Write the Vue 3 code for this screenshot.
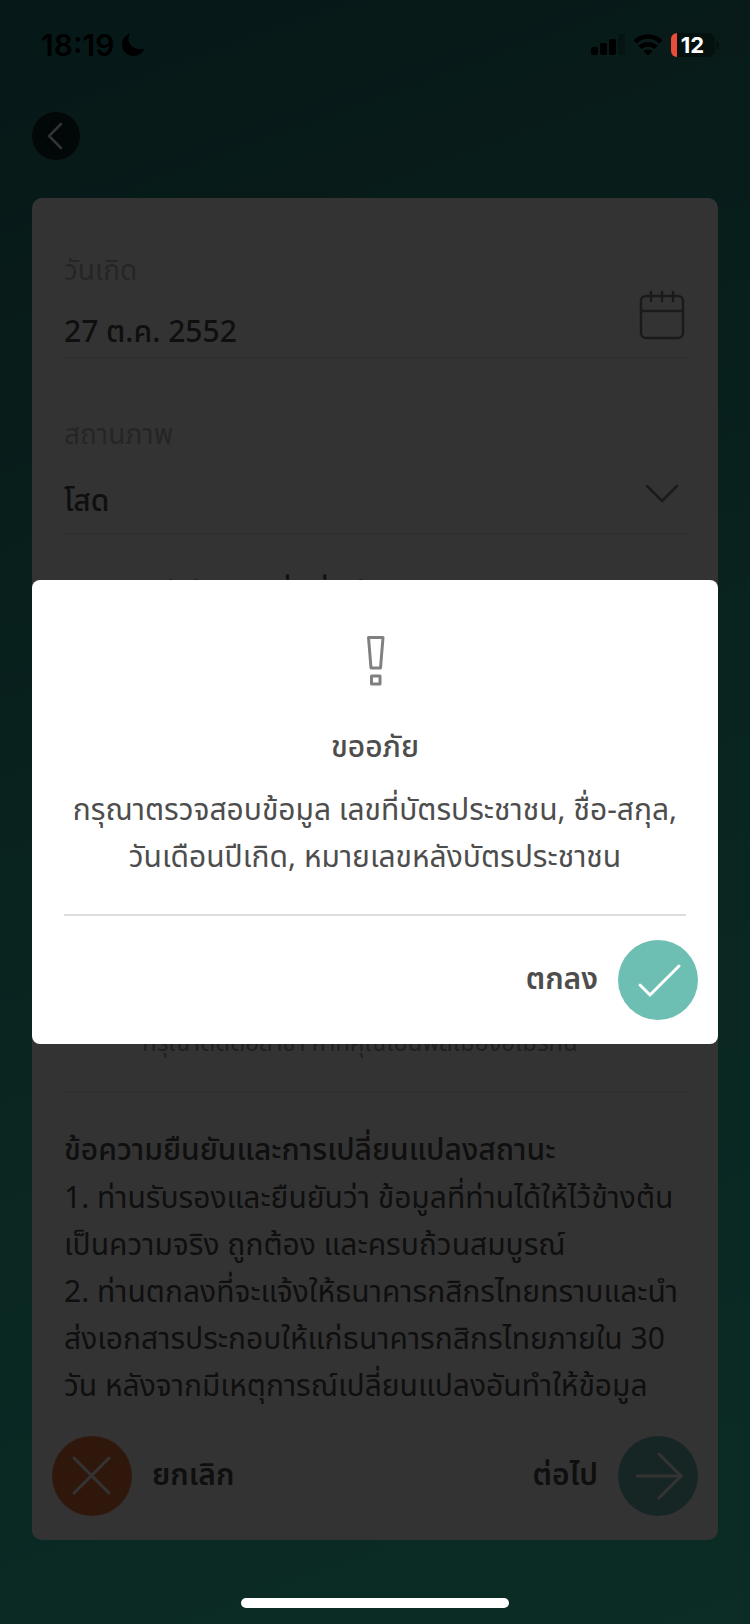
<script setup>
import { ref } from 'vue'

const birthDate = ref('27 ต.ค. 2552')
const status = ref('โสด')
const statuses = ['โสด', 'สมรส', 'หย่า']
const terms = [
  '1. ท่านรับรองและยืนยันว่า ข้อมูลที่ท่านได้ให้ไว้ข้างต้น',
  'เป็นความจริง ถูกต้อง และครบถ้วนสมบูรณ์',
  '2. ท่านตกลงที่จะแจ้งให้ธนาคารกสิกรไทยทราบและนำ',
  'ส่งเอกสารประกอบให้แก่ธนาคารกสิกรไทยภายใน 30',
  'วัน หลังจากมีเหตุการณ์เปลี่ยนแปลงอันทำให้ข้อมูล',
]
const message = [
  'กรุณาตรวจสอบข้อมูล เลขที่บัตรประชาชน, ชื่อ-สกุล,',
  'วันเดือนปีเกิด, หมายเลขหลังบัตรประชาชน',
]
</script>

<template>
  <div class="screen">
    <header class="status-bar">
      <div class="clock">
        <span class="time">18:19</span>
        <svg width="24" height="24" viewBox="0 0 24 24" aria-hidden="true">
          <path d="M9 .5C4 2 1 6.500 1 11.500C1 18 6 23 12.500 23C17.500 23 22 20 23.300 15.500C17 17.500 8 14 7.500 7C7.400 4.500 8 2.500 9 .5Z" />
        </svg>
      </div>
      <div class="indicators">
        <svg width="34" height="22" viewBox="0 0 34 22" aria-hidden="true">
          <rect x="0" y="13" width="7" height="8" rx="2" />
          <rect x="9" y="9" width="7" height="12" rx="2" />
          <rect x="18" y="5" width="7" height="16" rx="2" />
          <rect x="27" y="0" width="7" height="21" rx="2" opacity=".25" />
        </svg>
        <svg width="30" height="22" viewBox="0 0 30 22" aria-hidden="true">
          <g fill="none" stroke="#000" stroke-width="4.500">
            <path d="M2 8C9 .8 21 .8 28 8" />
            <path d="M7 13.500C11.500 9 18.500 9 23 13.500" />
          </g>
          <path d="M10.500 17.200C13 15 17 15 19.500 17.200L15 21.500Z" />
        </svg>
        <div class="battery"><span class="level"></span><span class="percent">12</span></div>
      </div>
    </header>

    <div class="toolbar">
      <button class="back" type="button" aria-label="กลับ">
        <svg width="48" height="48" viewBox="0 0 48 48" aria-hidden="true">
          <path d="M29 12L17 24L29 36" />
        </svg>
      </button>
    </div>

    <main class="card">
      <form class="fields" @submit.prevent>
        <div class="field field-date">
          <label for="birth">วันเกิด</label>
          <div class="control">
            <input id="birth" v-model="birthDate" type="text" />
            <svg class="calendar" width="48" height="50" viewBox="0 0 48 50" aria-hidden="true">
              <rect x="3" y="7" width="42" height="42" rx="5" />
              <path d="M3 22H45M13 3V12M24 3V12M35 3V12" />
            </svg>
          </div>
        </div>
        <div class="field field-status">
          <label for="status">สถานภาพ</label>
          <div class="control">
            <select id="status" v-model="status">
              <option v-for="s in statuses" :key="s">{{ s }}</option>
            </select>
            <svg class="chevron" width="48" height="48" viewBox="0 0 48 48" aria-hidden="true">
              <path d="M9 17L24 32L39 17" />
            </svg>
          </div>
        </div>
      </form>
      <section class="citizenship">
        <p class="question">ฉันไม่ใช่บุคคลที่มีที่อยู่อาศัยถาวรในอเมริกา</p>
        <p class="note">กรุณาติดต่อสาขา หากคุณเป็นพลเมืองอเมริกัน</p>
      </section>
      <section class="terms">
        <h2>ข้อความยืนยันและการเปลี่ยนแปลงสถานะ</h2>
        <p><span v-for="line in terms" :key="line">{{ line }}</span></p>
      </section>
      <footer class="actions">
        <button class="action" type="button">
          <span class="disc cancel">
            <svg width="80" height="80" viewBox="0 0 80 80" aria-hidden="true"><path d="M22 22L57 57M57 22L22 57" /></svg>
          </span>
          ยกเลิก
        </button>
        <button class="action" type="button">
          ต่อไป
          <span class="disc">
            <svg width="80" height="80" viewBox="0 0 80 80" aria-hidden="true"><path d="M19 40H62M41 18L63 40L41 62" /></svg>
          </span>
        </button>
      </footer>
    </main>

    <div class="overlay">
      <div class="dialog" role="alertdialog" aria-modal="true" aria-labelledby="dialog-title">
        <svg class="alert" width="20" height="50" viewBox="0 0 20 50" aria-hidden="true">
          <path d="M3.500 2.500H18L15.500 33H6Z" />
          <rect x="6.500" y="41" width="8.500" height="8" />
        </svg>
        <h1 id="dialog-title">ขออภัย</h1>
        <p><span v-for="line in message" :key="line">{{ line }}</span></p>
        <div class="dialog-actions">
          <button class="action" type="button">
            ตกลง
            <span class="disc">
              <svg width="80" height="80" viewBox="0 0 80 80" aria-hidden="true"><path d="M22 45L32 55L61 26" /></svg>
            </span>
          </button>
        </div>
      </div>
    </div>
    <div class="home-indicator"></div>
  </div>
</template>

<style>
body {
  margin: 0;
}
</style>

<style scoped>
.screen {
  position: relative;
  box-sizing: border-box;
  display: flex;
  flex-direction: column;
  min-height: 100vh;
  padding-bottom: 84px;
  background: linear-gradient(160deg, #1e7878 0%, #28877d 15%, #30b9a0 55%, #3cdcbe 100%);
  font-family: "Noto Sans", "Noto Sans Thai", sans-serif;
  font-size: 30px;
  color: #4d4d4d;
}
* {
  box-sizing: border-box;
}
h1,
h2,
p {
  margin: 0;
}
svg {
  display: block;
  flex: none;
  overflow: visible;
}
.status-bar {
  position: relative;
  z-index: 2;
  display: flex;
  justify-content: space-between;
  align-items: center;
  height: 90px;
  padding: 0 31px 0 41px;
  font-family: Inter, sans-serif;
}
.clock,
.indicators {
  display: flex;
  align-items: center;
}
.clock {
  gap: 7px;
}
.time {
  font-size: 30px;
  font-weight: 600;
  color: #000;
}
.indicators {
  gap: 8px;
}
.battery {
  position: relative;
  display: flex;
  align-items: center;
  width: 44px;
  height: 24px;
  margin-right: 4px;
  border-radius: 7px;
  background: #04110f;
}
.battery::after {
  content: "";
  position: absolute;
  right: -4px;
  width: 3px;
  height: 8px;
  border-radius: 0 3px 3px 0;
  background: #04110f;
}
.level {
  width: 6px;
  height: 24px;
  border-radius: 6px 0 0 6px;
  background: #eb4d3d;
}
.percent {
  flex: 1;
  padding-right: 7px;
  text-align: center;
  font-size: 22px;
  font-weight: 700;
  color: #fff;
}
.toolbar {
  padding: 22px 32px 38px;
}
button {
  padding: 0;
  border: 0;
  background: none;
  font: inherit;
  color: inherit;
}
.back {
  display: block;
  border-radius: 50%;
  background: #0a2323;
}
.back path {
  fill: none;
  stroke: #fff;
  stroke-width: 2.5;
  stroke-linecap: round;
}
.card {
  flex: 1;
  display: flex;
  flex-direction: column;
  margin: 0 32px;
  border-radius: 10px;
  background: #fff;
}
.fields,
.citizenship,
.terms {
  margin: 0 32px;
}
.field {
  display: flex;
  flex-direction: column;
  justify-content: flex-end;
  border-bottom: 2px solid #eee;
}
.field-date {
  height: 161px;
}
.field-status {
  height: 176px;
}
label {
  line-height: 40px;
  font-size: 28px;
  color: #bbb;
}
.control {
  display: flex;
  align-items: flex-start;
  justify-content: space-between;
  gap: 16px;
}
.field-date .control {
  height: 68px;
}
.field-status .control {
  height: 80px;
  padding-top: 16px;
}
input,
select {
  flex: 1;
  min-width: 0;
  height: 60px;
  padding: 0;
  border: 0;
  background: none;
  appearance: none;
  font: inherit;
  font-weight: 500;
  color: #4d4d4d;
}
.field-date input {
  height: 68px;
  padding-top: 20px;
}
.control svg {
  fill: none;
  stroke: #808080;
  stroke-width: 2.5;
  stroke-linecap: round;
}
.citizenship {
  flex: 1;
  display: flex;
  flex-direction: column;
  justify-content: space-between;
  padding: 38px 30px 34px 0;
  border-bottom: 2px solid #eee;
  text-align: center;
}
.question {
  font-weight: 500;
}
.note {
  font-size: 24px;
  line-height: 30px;
  color: #a0a0a0;
}
.terms {
  padding: 32px 0 4px;
  line-height: 47px;
}
h1,
h2 {
  font-size: 30px;
  font-weight: 500;
  line-height: 48px;
}
p span {
  display: block;
  white-space: nowrap;
}
.actions {
  display: flex;
  justify-content: space-between;
  padding: 24px 20px;
}
.action {
  display: flex;
  align-items: center;
  gap: 20px;
  font-weight: 600;
}
.disc {
  border-radius: 50%;
  background: #6cbfb2;
}
.disc.cancel {
  background: #f0733c;
}
.disc path {
  fill: none;
  stroke: #fff;
  stroke-width: 3;
  stroke-linecap: round;
}
.overlay {
  position: absolute;
  inset: 0;
  z-index: 1;
  display: flex;
  align-items: center;
  padding: 0 32px;
  background: rgba(0, 0, 0, 0.8);
}
.dialog {
  flex: 1;
  padding: 55px 32px 0;
  border-radius: 8px;
  background: #fff;
  text-align: center;
}
.alert {
  margin: 0 auto 37px;
  fill: none;
  stroke: #808080;
  stroke-width: 3;
  stroke-linejoin: round;
}
.dialog h1 {
  margin-bottom: 15px;
}
.dialog p {
  line-height: 47px;
}
.dialog-actions {
  display: flex;
  justify-content: flex-end;
  margin-top: 35px;
  margin-right: -12px;
  padding: 26px 0 24px;
  position: relative;
}
.dialog-actions::before {
  content: "";
  position: absolute;
  top: 0;
  left: 0;
  right: 12px;
  height: 2px;
  background: #ddd;
}
.home-indicator {
  position: absolute;
  z-index: 2;
  bottom: 16px;
  left: 0;
  right: 0;
  width: 36%;
  max-width: 268px;
  height: 10px;
  margin: 0 auto;
  border-radius: 5px;
  background: #fff;
}
</style>
